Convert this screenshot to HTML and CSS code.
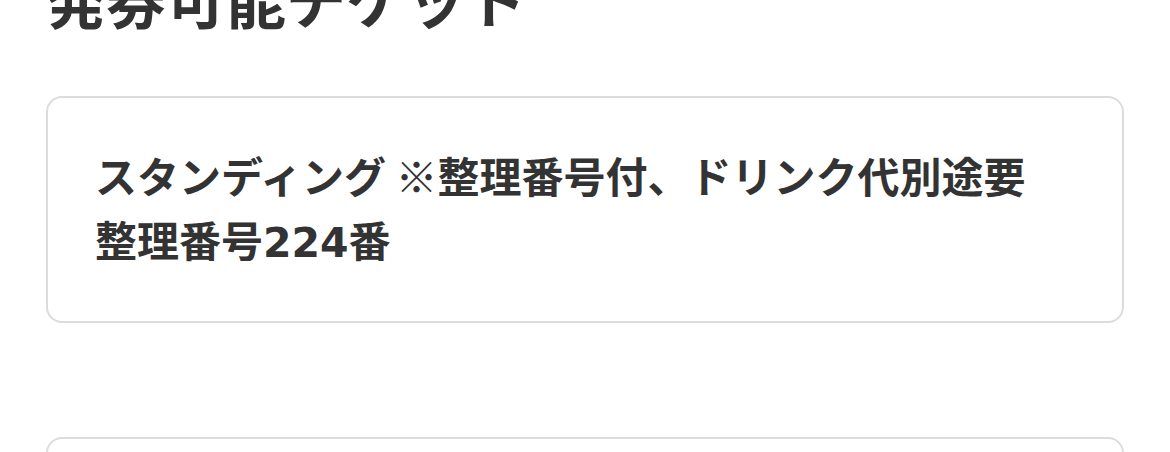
FILE: index.html
```html
<!DOCTYPE html>
<html lang="ja">
<head>
  <meta charset="UTF-8" />
  <meta name="viewport" content="width=device-width, initial-scale=1" />
  <title>発券可能チケット</title>
  <link rel="stylesheet" href="styles.css">
</head>
<body>
  <main class="page">
    <h2 class="section-title">発券可能チケット</h2>

    <div class="ticket">
      <p class="ticket-name">スタンディング ※整理番号付、ドリンク代別途要</p>
      <p class="ticket-number">整理番号<span class="num">224</span>番</p>
    </div>

    <div class="ticket">
      <p class="ticket-name">スタンディング ※整理番号付、ドリンク代別途要</p>
      <p class="ticket-number">整理番号<span class="num">225</span>番</p>
    </div>
  </main>
</body>
</html>
```

FILE: styles.css
```css
/* ベース */
html, body {
  margin: 0;
  padding: 0;
  background-color: #fff;
  color: #333;
  font-family: "Noto Sans CJK JP", "Noto Sans", sans-serif;
}

.page {
  padding: 0 46px;
  margin-top: -43px; /* 見出しの上はスクロール済み */
}

.section-title {
  margin: 0 0 58px 0;
  font-size: 60px;
  line-height: 81px;
  font-weight: 700;
}

/* チケットカード */
.ticket {
  border: 2px solid #dcdcdc;
  border-radius: 16px;
  padding: 45px 47px 46px;
  margin-bottom: 114px;
}

.ticket p {
  margin: 0;
  font-size: 42px;
  line-height: 64px;
  font-weight: 700;
}

/* 数字は幅広のフォントで */
.num {
  font-family: "DejaVu Sans", sans-serif;
  font-size: 41px;
}
```
